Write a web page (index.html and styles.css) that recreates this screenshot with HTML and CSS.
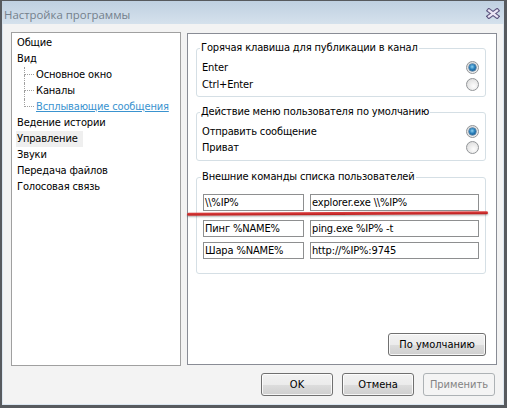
FILE: index.html
```html
<!DOCTYPE html>
<html lang="ru">
<head>
  <meta charset="UTF-8" />
  <meta name="viewport" content="width=device-width, initial-scale=1.0"/>
  <title>Настройка программы</title>
  <link rel="stylesheet" href="styles.css">
</head>
<body>
  <div class="window">
    <div class="titlebar">
      <span class="title">Настройка программы</span>
      <svg class="close" width="14" height="11" viewBox="0 0 14 11">
        <g stroke-linecap="square">
          <line x1="3" y1="2.5" x2="11" y2="8.5" stroke="#5e5680" stroke-width="4.4"/>
          <line x1="11" y1="2.5" x2="3" y2="8.5" stroke="#5e5680" stroke-width="4.4"/>
          <line x1="3" y1="2.5" x2="11" y2="8.5" stroke="#ece6f5" stroke-width="2.2"/>
          <line x1="11" y1="2.5" x2="3" y2="8.5" stroke="#ece6f5" stroke-width="2.2"/>
        </g>
      </svg>
    </div>

    <div class="client">
      <div class="main">
        <ul class="tree">
          <li class="node"><span class="label">Общие</span></li>
          <li class="node"><span class="label">Вид</span></li>
          <li class="node child"><span class="branch"></span><span class="label">Основное окно</span></li>
          <li class="node child"><span class="branch"></span><span class="label">Каналы</span></li>
          <li class="node child last"><span class="branch"></span><span class="label link">Всплывающие сообщения</span></li>
          <li class="node"><span class="label">Ведение истории</span></li>
          <li class="node"><span class="label selected">Управление</span></li>
          <li class="node"><span class="label">Звуки</span></li>
          <li class="node"><span class="label">Передача файлов</span></li>
          <li class="node"><span class="label">Голосовая связь</span></li>
        </ul>

        <div class="panel">
          <fieldset class="group hotkey">
            <legend>Горячая клавиша для публикации в канал</legend>
            <div class="option"><span>Enter</span><span class="radio checked"><span class="dot"></span></span></div>
            <div class="option"><span>Ctrl+Enter</span><span class="radio"></span></div>
          </fieldset>

          <fieldset class="group action">
            <legend>Действие меню пользователя по умолчанию</legend>
            <div class="option"><span>Отправить сообщение</span><span class="radio checked"><span class="dot"></span></span></div>
            <div class="option"><span>Приват</span><span class="radio"></span></div>
          </fieldset>

          <fieldset class="group commands">
            <legend>Внешние команды списка пользователей</legend>
            <div class="cmd first"><div class="field name">\\%IP%</div><div class="field value">explorer.exe \\%IP%</div></div>
            <div class="cmd second"><div class="field name">Пинг %NAME%</div><div class="field value">ping.exe %IP% -t</div></div>
            <div class="cmd"><div class="field name">Шара %NAME%</div><div class="field value">http://%IP%:9745</div></div>
          </fieldset>

          <div class="panel-actions">
            <button class="btn wide">По умолчанию</button>
          </div>

          <!-- red marker stroke across the first command row -->
          <div class="marker"></div>
        </div>
      </div>

      <div class="footer">
        <button class="btn">OK</button>
        <button class="btn">Отмена</button>
        <button class="btn" disabled>Применить</button>
      </div>
    </div>
  </div>
</body>
</html>
```

FILE: styles.css
```css
/* --- Window frame --- */
body {
  margin: 0;
  background: #5a5d61;
  font-family: "DejaVu Sans Condensed", "DejaVu Sans", "Liberation Sans", sans-serif;
  font-size: 11px;
  letter-spacing: -0.15px;
  color: #000;
}

.window {
  width: 507px;
  height: 408px;
  box-sizing: border-box;
  border-style: solid;
  border-color: #575a5e;
  border-width: 1px 3px 3px 2px;
  background: linear-gradient(#bfd0e1, #d6e2ed 24px);
  display: flex;
  flex-direction: column;
}

.titlebar {
  height: 23px;
  flex: none;
  display: flex;
  align-items: center;
  justify-content: space-between;
  padding: 0 4px 0 2px;
}

.title {
  font-family: "Open Sans", "Noto Sans", sans-serif;
  font-size: 11.4px;
  letter-spacing: 0;
  color: #74808c;
  padding-top: 3px;
}

.close { margin-top: 2px; }

.client {
  flex: 1;
  background: #f3f3f3;
  border: 1px solid #dbe6f0;
  border-top: none;
  padding: 8px 6px 0 8px;
}

.main { display: flex; gap: 6px; }

/* --- Left tree --- */
.tree {
  list-style: none;
  margin: 0;
  width: 170px;
  height: 334px;
  box-sizing: border-box;
  padding: 2px 0 0 4px;
  background: #fff;
  border: 1px solid #a0a0a0;
}

.node { height: 16px; line-height: 16px; display: flex; }
.label { padding: 0 5px 0 1px; white-space: nowrap; }
.label.selected { background: #efefef; }
.label.link { color: #3a93cf; text-decoration: underline; }

.branch {
  width: 10px;
  height: 16px;
  margin: 0 1px 0 8px;
  display: flex;
  flex-direction: column;
}
.branch::before {
  content: "";
  height: 7px;
  flex: none;
  border-left: 1px dotted #a0a0a0;
  border-bottom: 1px dotted #a0a0a0;
}
.branch::after {
  content: "";
  flex: 1;
  border-left: 1px dotted #a0a0a0;
}
.child.last .branch::after { border-left: none; }

/* --- Right page --- */
.panel {
  position: relative;
  width: 310px;
  height: 332px;
  margin-top: 1px;
  box-sizing: border-box;
  border: 1px solid #898c95;
  background: #fff;
  padding: 7px 10px 8px 8px;
  display: flex;
  flex-direction: column;
}

.group {
  margin: 0;
  min-width: 0;
  border: 1px solid #d5dfe5;
  border-radius: 3px;
  padding: 4px 6px 4px 5px;
  display: flex;
  flex-direction: column;
}
.group legend { padding: 0 1px; margin-left: -2px; line-height: 14px; }

.hotkey { gap: 1px; margin-bottom: 8px; }
.action { padding-bottom: 5px; margin-bottom: 9px; }
.commands { padding: 10px 6px 14px 6px; }

.option {
  height: 16px;
  display: flex;
  align-items: center;
  justify-content: space-between;
}

.radio {
  width: 13px;
  height: 13px;
  box-sizing: border-box;
  border-radius: 50%;
  border: 1px solid #929598;
  background: radial-gradient(circle at 60% 65%, #fdfdfd 0, #e6e6e6 60%, #d2d2d2 100%);
  display: flex;
  align-items: center;
  justify-content: center;
}
.radio .dot {
  width: 7px;
  height: 7px;
  border-radius: 50%;
  background: radial-gradient(circle at 45% 40%, #8fd2f2 0, #2a80bb 45%, #0b4275 100%);
  box-shadow: 0 0 0 0.5px #1b4f7c;
}

.cmd { display: flex; gap: 6px; }
.cmd.first { margin-bottom: 9px; }
.cmd.second { margin-bottom: 5px; }

.field {
  height: 17px;
  box-sizing: border-box;
  border: 1px solid #8e8f90;
  background: #fff;
  line-height: 15px;
  padding: 0 1px;
  white-space: nowrap;
  overflow: hidden;
}
.field.name { width: 101px; flex: none; }
.field.value { flex: 1; }

.panel-actions { margin-top: auto; display: flex; justify-content: flex-end; }

.marker {
  position: absolute;
  left: -1px;
  top: 178px;
  width: 301px;
  height: 3px;
  border-radius: 2px;
  background: linear-gradient(#e04444, #b71a1a);
  box-shadow: 0 1px 2px rgba(0, 0, 0, 0.35);
  transform: rotate(-0.3deg);
}

/* --- Buttons --- */
.btn {
  font: inherit;
  color: #000;
  width: 72px;
  height: 23px;
  padding: 0;
  border: 1px solid #707070;
  border-radius: 3px;
  background: linear-gradient(#f2f2f2, #ebebeb 50%, #dddddd 50%, #cfcfcf);
  box-shadow: inset 0 0 0 1px rgba(255, 255, 255, 0.8);
}
.btn.wide { width: 98px; }
.btn:disabled {
  color: #838383;
  border-color: #adb2b5;
  background: #f4f4f4;
  box-shadow: none;
}

.footer {
  display: flex;
  justify-content: flex-end;
  gap: 9px;
  margin-top: 7px;
  padding-right: 2px;
}
```
